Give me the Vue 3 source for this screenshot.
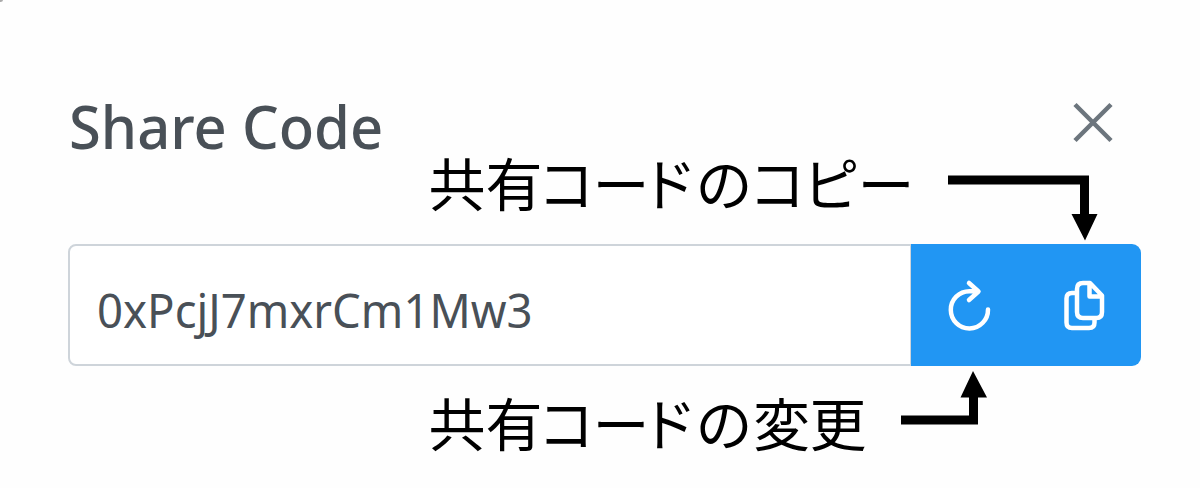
<script setup>
const copyLabel = '共有コードのコピー'
const changeLabel = '共有コードの変更'
</script>

<template>
  <main class="dialog">
    <i class="corner"></i>
    <header class="header">
      <h1 class="title"><span>Share Code</span></h1>
      <button class="close" aria-label="Close">
        <svg width="42" height="42" viewBox="0 0 42 42"><path d="M3 2.5L39 38.5M39 2.5L3 38.5" /></svg>
      </button>
    </header>

    <div class="group">
      <div class="field"><span>0xPcjJ7mxrCm1Mw3</span></div>
      <button class="action" aria-label="Change">
        <svg width="116" height="122" viewBox="0 0 116 122">
          <path d="M77 65.5A18.6 18.6 0 1 1 58.4 47.2H67M58 39L67.5 47.5L58 56" />
        </svg>
      </button>
      <button class="action last" aria-label="Copy">
        <svg width="114" height="122" viewBox="0 0 114 122">
          <path d="M48 49H45Q39.5 49 39.5 54.5V78.5Q39.5 84 45 84H62Q67.5 84 67.5 78.5V75M56 39H63L75 51.5V68Q75 74 69.5 74H56Q50 74 50 68V45Q50 39 56 39ZM62.5 39.5V52.5H74.5" />
        </svg>
      </button>
    </div>

    <svg class="notes" width="1200" height="488" viewBox="0 0 1200 488">
      <text x="428.5 485.5 537.5 592.5 640 695.5 748.5 802.5 857.5" y="206">{{ copyLabel }}</text>
      <text x="428.5 485.5 537.5 592.5 640 695.5 753 809.5" y="446">{{ changeLabel }}</text>
      <path class="line" d="M948 180H1084.5V216M901 420H973.5V395" />
      <path d="M1071.5 214H1097.5L1085 240.5ZM960.5 397.5H987L973 371Z" />
    </svg>
  </main>
</template>

<style>
body {
  margin: 0;
  background: #fefefe;
}
</style>

<style scoped>
.dialog {
  position: relative;
  box-sizing: border-box;
  width: 1200px;
  height: 488px;
  padding: 82px 59px 0 68px;
  overflow: hidden;
  background: #fefefe;
  font-family: "Noto Sans", "Open Sans", sans-serif;
}
.corner {
  position: absolute;
  left: -2px;
  top: -2px;
  width: 5px;
  height: 4px;
  border-radius: 50%;
  background: #aaa;
}
.header {
  display: flex;
  justify-content: space-between;
  height: 162px;
}
.title {
  margin: 0;
  color: #495057;
  font-size: 60px;
  font-weight: 550;
  line-height: 88px;
  white-space: nowrap;
}
.title span,
.field span {
  display: inline-block;
  transform-origin: 0 50%;
}
.title span {
  transform: translateX(1px) scaleX(0.965);
}
.field span {
  transform: translateX(1px) scaleX(0.948);
}
button {
  margin: 0;
  padding: 0;
  border: 0;
}
.close {
  width: 42px;
  height: 42px;
  margin: 20px 27px 0 0;
  background: none;
}
svg {
  display: block;
}
.close path {
  fill: none;
  stroke: #6c757d;
  stroke-width: 4.5;
}
.group {
  display: flex;
  height: 122px;
}
.field {
  box-sizing: border-box;
  width: 843px;
  padding-left: 26px;
  border: 2.5px solid #ced4da;
  border-right-width: 1px;
  border-radius: 8px 0 0 8px;
  background: #fff;
  color: #495057;
  font-size: 48px;
  line-height: 128px;
  white-space: nowrap;
}
.action {
  width: 116px;
  background: #2196f3;
}
.last {
  width: 114px;
  border-radius: 0 9px 9px 0;
}
.action path {
  fill: none;
  stroke: #fff;
  stroke-width: 4.5;
  stroke-linecap: round;
  stroke-linejoin: round;
}
.notes {
  position: absolute;
  inset: 0;
  pointer-events: none;
}
.notes text {
  font-family: "Noto Sans CJK JP", sans-serif;
  font-size: 57px;
}
.notes .line {
  fill: none;
  stroke: #000;
  stroke-width: 9;
}
</style>
